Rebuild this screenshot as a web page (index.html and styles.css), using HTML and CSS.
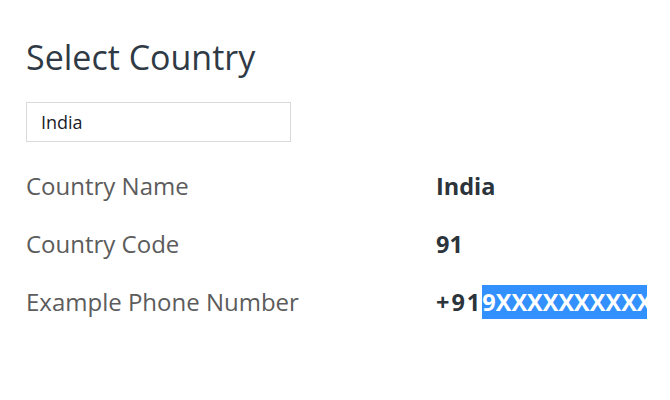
FILE: index.html
```html
<!DOCTYPE html>
<html lang="en">
<head>
<meta charset="utf-8">
<link rel="stylesheet" href="styles.css">
</head>
<body>
<main class="page">
  <h1 class="title">Select Country</h1>
  <input class="search" type="text" value="India">
  <dl class="details">
    <div class="row">
      <dt class="label">Country Name</dt>
      <dd class="value">India</dd>
    </div>
    <div class="row">
      <dt class="label">Country Code</dt>
      <dd class="value">91</dd>
    </div>
    <div class="row">
      <dt class="label">Example Phone Number</dt>
      <dd class="value"><span class="prefix">+91</span><span class="sel">9XXXXXXXXXX</span></dd>
    </div>
  </dl>
</main>
</body>
</html>
```
FILE: styles.css
```css
html, body {
  margin: 0;
  padding: 0;
  background: #fff;
}
body {
  font-family: "Open Sans", "Noto Sans", "Liberation Sans", sans-serif;
  color: #333;
}
.page {
  padding: 35px 0 0 26px;
}
.title {
  margin: 0;
  font-size: 34px;
  font-weight: 400;
  line-height: 44px;
  color: #2f3a45;
}
.search {
  display: block;
  box-sizing: border-box;
  margin: 23px 0 0 0;
  width: 265px;
  height: 40px;
  padding: 0 0 0 14px;
  border: 1px solid #d9d9d9;
  font-family: inherit;
  font-size: 18px;
  color: #1b1b2a;
  outline: none;
}
.details {
  margin: 27px 0 0 0;
  padding: 0;
}
.row {
  display: flex;
  height: 58px;
  align-items: flex-start;
}
.label {
  width: 410px;
  flex: none;
  font-size: 24px;
  line-height: 34px;
  color: #5c5c5c;
}
.value {
  margin: 0;
  width: 211px;
  overflow: hidden;
  white-space: nowrap;
  font-size: 23.5px;
  line-height: 34px;
  font-weight: 700;
  color: #2b333b;
}
.prefix {
  letter-spacing: 2px;
}
.sel {
  background: #3391ff;
  color: #fff;
  padding: 1px 0;
}
```
